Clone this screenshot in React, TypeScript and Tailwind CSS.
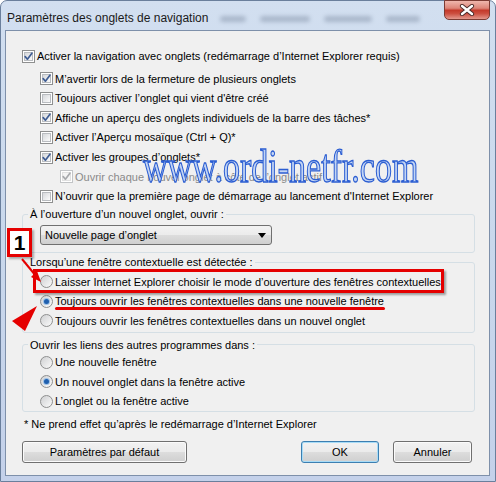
type RowProps = {
  label: string;
  checked?: boolean;
  disabled?: boolean;
};

function CheckBox({ checked, disabled }: { checked?: boolean; disabled?: boolean }) {
  return (
    <span
      className={`relative block w-[13px] h-[13px] shrink-0 border bg-white p-[1px] ${
        disabled ? "border-[#c2c4c6]" : "border-[#8e8f8f]"
      }`}
    >
      <span
        className={`block w-full h-full border ${
          disabled
            ? "border-[#e0e0e0] bg-[#f4f4f4]"
            : "border-[#b9bcc0] bg-gradient-to-br from-[#d6d8db] to-[#fbfbfb]"
        }`}
      />
      {checked && (
        <svg className="absolute left-0 top-0" width="11" height="11" viewBox="0 0 11 11">
          <path
            d="M2.2 5.6 L4.4 8.2 L8.9 2.2"
            fill="none"
            stroke={disabled ? "#a7a9ac" : "#3f5d93"}
            strokeWidth="1.7"
            strokeLinecap="round"
            strokeLinejoin="round"
          />
        </svg>
      )}
    </span>
  );
}

function Radio({ checked }: { checked?: boolean }) {
  return (
    <span className="relative block w-[13px] h-[13px] shrink-0 rounded-full border border-[#8e8f8f] bg-gradient-to-br from-[#cfd0d2] to-[#fbfbfb]">
      {checked && (
        <span className="absolute left-[3px] top-[3px] w-[5px] h-[5px] rounded-full bg-[#1f5fae] ring-1 ring-[#9cc0e6]" />
      )}
    </span>
  );
}

function CheckRow({ label, checked, disabled }: RowProps) {
  return (
    <div className="flex items-center gap-[2px] h-[19.6px]">
      <CheckBox checked={checked} disabled={disabled} />
      <span className={`whitespace-nowrap ${disabled ? "text-[#8a8a8a]" : ""}`}>{label}</span>
    </div>
  );
}

function RadioRow({ label, checked }: { label: string; checked?: boolean }) {
  return (
    <div className="flex items-center gap-[2px] h-[19.5px]">
      <Radio checked={checked} />
      <span className="whitespace-nowrap">{label}</span>
    </div>
  );
}

function WinButton({ label, primary, width }: { label: string; primary?: boolean; width: string }) {
  return (
    <div
      className={`${width} h-[22px] flex items-center justify-center rounded-[3px] border bg-[linear-gradient(#f2f2f2,#ebebeb_50%,#dddddd_50%,#cfcfcf)] ${
        primary ? "border-[#3c7fb1] shadow-[inset_0_0_0_1px_#a8dcf7]" : "border-[#707070] shadow-[inset_0_0_0_1px_#fbfbfb]"
      }`}
    >
      {label}
    </div>
  );
}

export default function App() {
  return (
    <div className="relative w-[496px] h-[482px] overflow-hidden font-['Liberation_Sans',Arial,sans-serif] text-[11px] text-black">
      <div className="flex flex-col w-full h-full rounded-t-[7px] border border-[#6a7f9c] bg-gradient-to-b from-[#d2dff0] via-[#c9d8ec] to-[#c4d1ea]">
        {/* title bar */}
        <div className="relative flex h-[29px] shrink-0 pl-[6px]">
          <span className="mt-[8px] text-[12px] text-[#1a1a1a]">Paramètres des onglets de navigation</span>
          <div className="flex items-center gap-[14px] ml-[12px] mt-[12px] h-[12px] opacity-40 blur-[2px]">
            <span className="block w-[26px] h-[6px] rounded-full bg-[#6d7c93]" />
            <span className="block w-[50px] h-[6px] rounded-full bg-[#6d7c93]" />
            <span className="block w-[48px] h-[6px] rounded-full bg-[#6d7c93]" />
            <span className="block w-[34px] h-[6px] rounded-full bg-[#6d7c93]" />
          </div>
          <div className="ml-auto mr-[5px] -mt-px w-[46px] h-[20px] rounded-b-[5px] border border-[#7c3b33] bg-[linear-gradient(#efb7ad,#dd8578_40%,#c43a2b_52%,#cc4f40_70%,#e3998e)] flex items-center justify-center">
            <svg width="16" height="12" viewBox="0 0 16 12">
              <path d="M3 2 L13 10 M13 2 L3 10" stroke="#4a2a28" strokeWidth="4.2" strokeLinecap="round" />
              <path d="M3 2 L13 10 M13 2 L3 10" stroke="#ffffff" strokeWidth="2.4" strokeLinecap="round" />
            </svg>
          </div>
        </div>

        {/* client area */}
        <div className="flex-1 ml-[4px] mr-[5px] mb-[5px] border border-[#7e90aa] bg-[#f0f0f0] flex flex-col pl-[16px] pr-[14px] pt-[15px]">
          <div className="flex items-center gap-[2px] h-[20px]">
            <CheckBox checked />
            <span className="whitespace-nowrap">Activer la navigation avec onglets (redémarrage d’Internet Explorer requis)</span>
          </div>
          <div className="flex flex-col mt-[3px] pl-[18px]">
            <CheckRow checked label="M’avertir lors de la fermeture de plusieurs onglets" />
            <CheckRow label="Toujours activer l’onglet qui vient d'être créé" />
            <CheckRow checked label="Affiche un aperçu des onglets individuels de la barre des tâches*" />
            <CheckRow label="Activer l’Aperçu mosaïque (Ctrl + Q)*" />
            <CheckRow checked label="Activer les groupes d’onglets*" />
            <div className="pl-[20px]">
              <CheckRow checked disabled label="Ouvrir chaque nouvel onglet à côté de l’onglet actif" />
            </div>
            <CheckRow label="N’ouvrir que la première page de démarrage au lancement d'Internet Explorer" />
          </div>

          <fieldset className="border border-[#d5dfe5] rounded-[3px] pb-[7px]">
            <legend className="ml-[5px] px-[2px] leading-[16px]">À l’ouverture d’un nouvel onglet, ouvrir :</legend>
            <div className="pl-[17px] pt-[3px]">
              <div className="relative w-[232px] h-[20px] flex items-center pl-[4px] rounded-[3px] border border-[#707070] bg-[linear-gradient(#f2f2f2,#ebebeb_50%,#dddddd_50%,#cfcfcf)]">
                <span>Nouvelle page d’onglet</span>
                <svg className="ml-auto mr-[5px]" width="8" height="5" viewBox="0 0 8 5">
                  <path d="M0 0 H8 L4 5 Z" fill="#000" />
                </svg>
              </div>
            </div>
          </fieldset>

          <fieldset className="mt-[1px] border border-[#d5dfe5] rounded-[3px] pb-[1px]">
            <legend className="ml-[5px] px-[2px] leading-[16px]">Lorsqu’une fenêtre contextuelle est détectée :</legend>
            <div className="flex flex-col pl-[17px] pt-[2px]">
              <RadioRow label="Laisser Internet Explorer choisir le mode d’ouverture des fenêtres contextuelles" />
              <RadioRow checked label="Toujours ouvrir les fenêtres contextuelles dans une nouvelle fenêtre" />
              <RadioRow label="Toujours ouvrir les fenêtres contextuelles dans un nouvel onglet" />
            </div>
          </fieldset>

          <fieldset className="mt-[4px] border border-[#d5dfe5] rounded-[3px]">
            <legend className="ml-[5px] px-[2px] leading-[16px]">Ouvrir les liens des autres programmes dans :</legend>
            <div className="flex flex-col pl-[17px]">
              <RadioRow label="Une nouvelle fenêtre" />
              <RadioRow checked label="Un nouvel onglet dans la fenêtre active" />
              <RadioRow label="L’onglet ou la fenêtre active" />
            </div>
          </fieldset>

          <div className="mt-[4px] pl-[2px] leading-[16px]">* Ne prend effet qu’après le redémarrage d’Internet Explorer</div>

          <div className="mt-[9px] flex items-center pr-[3px]">
            <WinButton label="Paramètres par défaut" width="w-[165px]" />
            <div className="flex-1" />
            <WinButton primary label="OK" width="w-[78px]" />
            <div className="w-[14px]" />
            <WinButton label="Annuler" width="w-[79px]" />
          </div>
        </div>
      </div>

      {/* watermark */}
      <div className="absolute left-[143px] top-[144px] origin-top scale-y-[1.35] whitespace-nowrap font-['Liberation_Serif',serif] text-[34px] leading-none text-[#c3d5f4] [-webkit-text-stroke:1px_#2c5ed2] pointer-events-none">
        www.ordi-netfr.com
      </div>

      {/* annotations */}
      <div className="absolute left-[33px] top-[269px] w-[411px] h-[24px] border-[3px] border-[#e50000] shadow-[2px_2px_2px_rgba(0,0,0,0.35)] pointer-events-none" />
      <div className="absolute left-[55px] top-[307px] w-[330px] h-[3px] rounded-full bg-[#e50000] pointer-events-none" />
      <div className="absolute left-[7px] top-[228px] w-[25px] h-[29px] border-[3px] border-[#e50000] bg-white flex items-center justify-center shadow-[2px_2px_2px_rgba(0,0,0,0.3)] text-[21px] font-bold leading-none pointer-events-none">
        1
      </div>
      <svg className="absolute left-0 top-0 pointer-events-none" width="496" height="482" viewBox="0 0 496 482">
        <line x1="22" y1="259" x2="36" y2="276" stroke="#e50000" strokeWidth="2" />
        <path d="M41 282 L31 277 L37 271 Z" fill="#e50000" />
        <path d="M37 306 L12 321 L25 331 Z" fill="#e50000" />
      </svg>
    </div>
  );
}
